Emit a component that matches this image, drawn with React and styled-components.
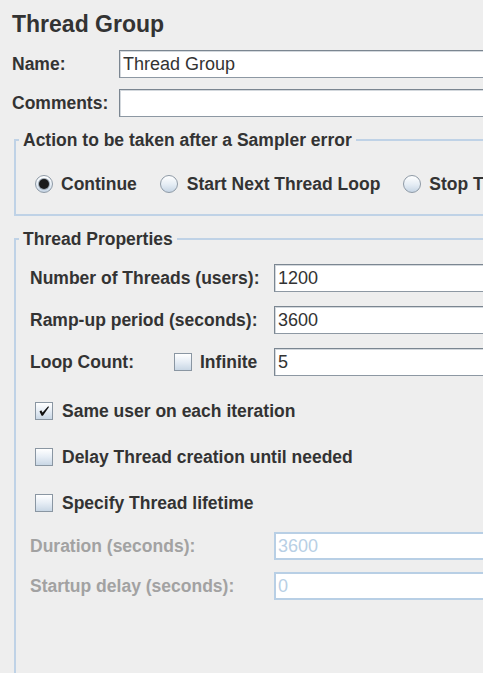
import React from 'react'
import styled, { createGlobalStyle } from 'styled-components'

const GlobalStyle = createGlobalStyle`
html, body {
  margin: 0;
  padding: 0;
  overflow: hidden;
  background: #eeeeee;
}
body {
  font-family: "Liberation Sans", Arial, sans-serif;
  color: #333333;
}
`

const Page = styled.div`
width: 640px;
padding: 10px 0 0 12px;
`

const Title = styled.h1`
margin: 0;
font-size: 23px;
font-weight: 700;
line-height: 28px;
color: #333333;
`

const TopGrid = styled.div`
display: grid;
grid-template-columns: 107px 1fr;
grid-auto-rows: 28px;
row-gap: 11px;
margin-top: 12px;
`

const Label = styled.span`
align-self: center;
font-size: 17.5px;
font-weight: 700;
line-height: 20px;
white-space: nowrap;
color: ${p => (p.$disabled ? '#a2a2a2' : '#333333')};
`

const TextBox = styled.input`
box-sizing: border-box;
height: 28px;
width: 100%;
margin: 0;
padding: 0 3px;
font-family: "Liberation Sans", Arial, sans-serif;
font-size: 18px;
color: #333333;
background: #ffffff;
border: 1px solid #8d98a3;
border-top-color: #7b8691;
border-left-color: #7b8691;
box-shadow: inset 1px 1px 0 #d3d8dd;
outline: none;
&:disabled {
  color: #b8cfe5;
  -webkit-text-fill-color: #b8cfe5;
  border: 2px solid #b8cfe5;
  box-shadow: none;
  padding: 0 2px;
}
`

const Group = styled.fieldset`
margin: 13px 0 0 2px;
padding: 0;
min-width: 0;
border: 2px solid #bfd2e6;
height: ${p => p.$tall ? '520px' : 'auto'};
`

const Legend = styled.legend`
margin-left: 3px;
padding: 0 4px;
font-size: 17.5px;
font-weight: 700;
line-height: 20px;
color: #333333;
`

const RadioRow = styled.div`
display: flex;
align-items: center;
gap: 23px;
height: 20px;
padding: 24px 0 20px 19px;
`

const Option = styled.label`
display: flex;
align-items: center;
gap: ${p => p.$gap || 8}px;
font-size: 17.5px;
font-weight: 700;
line-height: 20px;
white-space: nowrap;
color: #333333;
`

const Radio = styled.span`
position: relative;
box-sizing: border-box;
width: 18px;
height: 18px;
border-radius: 50%;
border: 1px solid #8e9aa6;
background: linear-gradient(180deg, #ffffff 0%, #e4ecf4 55%, #c6d5e4 100%);
flex: none;
&::after {
  content: '';
  display: ${p => (p.$checked ? 'block' : 'none')};
  position: absolute;
  left: 3px;
  top: 3px;
  width: 10px;
  height: 10px;
  border-radius: 50%;
  background: #1b1b1b;
  box-shadow: 0 0 0 1px #9aa6b2;
}
`

const Box = styled.span`
display: flex;
align-items: center;
justify-content: center;
box-sizing: border-box;
width: 18px;
height: 18px;
border: 1px solid #8a96a2;
background: linear-gradient(180deg, #ffffff 0%, #e6edf5 50%, #c9d7e5 100%);
flex: none;
`

const Content = styled.div`
padding: 15px 0 0 14px;
`

const FormGrid = styled.div`
display: grid;
grid-template-columns: 244px 1fr;
grid-auto-rows: 28px;
row-gap: ${p => p.$gap}px;
margin-top: ${p => p.$top || 0}px;
`

const LoopCell = styled.div`
display: flex;
align-items: center;
`

const LoopLabel = styled(Label)`
width: 144px;
`

const CheckList = styled.div`
display: flex;
flex-direction: column;
gap: 28px;
margin-top: 26px;
padding-left: 5px;
`

const CheckRow = styled(Option)`
height: 18px;
`

function Check({ checked }) {
  return (
    <Box>
      {checked && (
        <svg width="12" height="12" viewBox="0 0 12 12">
          <path d="M1.5 6.5 L3.2 5.2 L4.6 7.4 L10.2 1.2 L11 2 L4.9 10.8 L3.6 10.8 Z" fill="#111" />
        </svg>
      )}
    </Box>
  )
}

export default function App() {
  return (
    <>
      <GlobalStyle />
      <Page>
        <Title>Thread Group</Title>
        <TopGrid>
          <Label>Name:</Label>
          <TextBox defaultValue="Thread Group" />
          <Label>Comments:</Label>
          <TextBox defaultValue="" />
        </TopGrid>

        <Group>
          <Legend>Action to be taken after a Sampler error</Legend>
          <RadioRow>
            <Option><Radio $checked />Continue</Option>
            <Option $gap={9}><Radio />Start Next Thread Loop</Option>
            <Option><Radio />Stop Thread</Option>
            <Option><Radio />Stop Test</Option>
          </RadioRow>
        </Group>

        <Group $tall>
          <Legend>Thread Properties</Legend>
          <Content>
            <FormGrid $gap={14}>
              <Label>Number of Threads (users):</Label>
              <TextBox defaultValue="1200" />
              <Label>Ramp-up period (seconds):</Label>
              <TextBox defaultValue="3600" />
              <LoopCell>
                <LoopLabel>Loop Count:</LoopLabel>
                <Option><Check />Infinite</Option>
              </LoopCell>
              <TextBox defaultValue="5" />
            </FormGrid>

            <CheckList>
              <CheckRow $gap={9}><Check checked />Same user on each iteration</CheckRow>
              <CheckRow $gap={9}><Check />Delay Thread creation until needed</CheckRow>
              <CheckRow $gap={9}><Check />Specify Thread lifetime</CheckRow>
            </CheckList>

            <FormGrid $gap={12} $top={20}>
              <Label $disabled>Duration (seconds):</Label>
              <TextBox disabled defaultValue="3600" />
              <Label $disabled>Startup delay (seconds):</Label>
              <TextBox disabled defaultValue="0" />
            </FormGrid>
          </Content>
        </Group>
      </Page>
    </>
  )
}
